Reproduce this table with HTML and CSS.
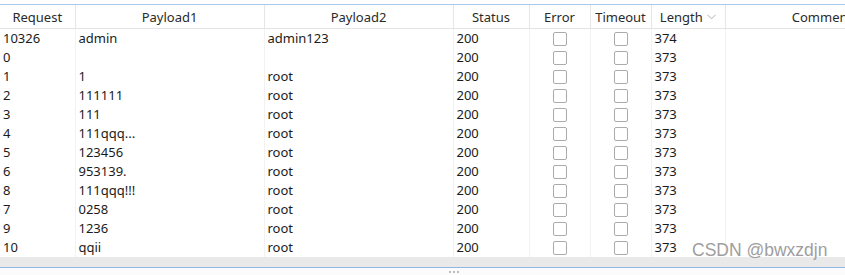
FILE: index.html
```html
<!DOCTYPE html>
<html>
<head>
<meta charset="utf-8">
<link rel="stylesheet" href="styles.css">
</head>
<body>
<div class="panel">
  <div class="topgap"></div>
  <table class="grid">
    <colgroup>
      <col class="c-req"><col class="c-p1"><col class="c-p2"><col class="c-st"><col class="c-err"><col class="c-to"><col class="c-len"><col class="c-com">
    </colgroup>
    <thead>
      <tr>
        <th>Request</th><th>Payload1</th><th>Payload2</th><th>Status</th><th>Error</th><th>Timeout</th><th>Length <span class="chev"><svg width="9" height="6" viewBox="0 0 9 6"><path d="M0.5 0.8 L4.5 4.8 L8.5 0.8" fill="none" stroke="#b0b0b0" stroke-width="1"/></svg></span></th><th>Comment</th>
      </tr>
    </thead>
    <tbody>
      <tr><td>10326</td><td>admin</td><td>admin123</td><td>200</td><td class="cb"><span class="box"></span></td><td class="cb"><span class="box"></span></td><td>374</td><td></td></tr>
      <tr><td>0</td><td></td><td></td><td>200</td><td class="cb"><span class="box"></span></td><td class="cb"><span class="box"></span></td><td>373</td><td></td></tr>
      <tr><td>1</td><td>1</td><td>root</td><td>200</td><td class="cb"><span class="box"></span></td><td class="cb"><span class="box"></span></td><td>373</td><td></td></tr>
      <tr><td>2</td><td>111111</td><td>root</td><td>200</td><td class="cb"><span class="box"></span></td><td class="cb"><span class="box"></span></td><td>373</td><td></td></tr>
      <tr><td>3</td><td>111</td><td>root</td><td>200</td><td class="cb"><span class="box"></span></td><td class="cb"><span class="box"></span></td><td>373</td><td></td></tr>
      <tr><td>4</td><td>111qqq...</td><td>root</td><td>200</td><td class="cb"><span class="box"></span></td><td class="cb"><span class="box"></span></td><td>373</td><td></td></tr>
      <tr><td>5</td><td>123456</td><td>root</td><td>200</td><td class="cb"><span class="box"></span></td><td class="cb"><span class="box"></span></td><td>373</td><td></td></tr>
      <tr><td>6</td><td>953139.</td><td>root</td><td>200</td><td class="cb"><span class="box"></span></td><td class="cb"><span class="box"></span></td><td>373</td><td></td></tr>
      <tr><td>8</td><td>111qqq!!!</td><td>root</td><td>200</td><td class="cb"><span class="box"></span></td><td class="cb"><span class="box"></span></td><td>373</td><td></td></tr>
      <tr><td>7</td><td>0258</td><td>root</td><td>200</td><td class="cb"><span class="box"></span></td><td class="cb"><span class="box"></span></td><td>373</td><td></td></tr>
      <tr><td>9</td><td>1236</td><td>root</td><td>200</td><td class="cb"><span class="box"></span></td><td class="cb"><span class="box"></span></td><td>373</td><td></td></tr>
      <tr><td>10</td><td>qqii</td><td>root</td><td>200</td><td class="cb"><span class="box"></span></td><td class="cb"><span class="box"></span></td><td>373</td><td></td></tr>
    </tbody>
  </table>
  <div class="hscroll"></div>
  <div class="splitter"><span class="dot"></span><span class="dot"></span><span class="dot"></span></div>
  <div class="watermark">CSDN @bwxzdjn</div>
</div>
</body>
</html>
```
FILE: styles.css
```css
html, body {
  margin: 0;
  padding: 0;
  background: #ffffff;
  overflow: hidden;
}
.panel {
  position: relative;
  width: 845px;
  height: 275px;
  overflow: hidden;
  font-family: "Noto Sans", "Open Sans", sans-serif;
  font-size: 13px;
  color: #1b1b1b;
}
.topgap {
  height: 4px;
  border-bottom: 1px solid #a9c9ea;
}
.grid {
  table-layout: fixed;
  border-collapse: collapse;
  width: 919px;
}
.c-req { width: 75px; }
.c-p1 { width: 189px; }
.c-p2 { width: 189px; }
.c-st { width: 76px; }
.c-err { width: 61px; }
.c-to { width: 61px; }
.c-len { width: 74px; }
.c-com { width: 194px; }
.grid th {
  height: 23px;
  padding: 0;
  font-weight: normal;
  color: #2a2a2a;
  text-align: center;
  border-right: 1px solid #e6e6e6;
  border-bottom: 1px solid #e4e4e4;
  white-space: nowrap;
  line-height: 22px;
}
.grid td {
  height: 19px;
  padding: 0 0 0 3px;
  line-height: 19px;
  white-space: nowrap;
  overflow: hidden;
  border-right: 1px solid #f2f2f2;
  text-align: left;
}
.grid td.cb {
  padding: 0;
  text-align: center;
}
.box {
  display: inline-block;
  width: 12px;
  height: 12px;
  border: 1px solid #ababab;
  border-radius: 2px;
  vertical-align: middle;
  margin-top: -2px;
  background: #fff;
}
.chev {
  display: inline-block;
  vertical-align: middle;
  margin-left: 1px;
  margin-top: -3px;
}
.chev svg { display: block; }
.hscroll {
  height: 10px;
  background: #e9e9e9;
  border-bottom: 1px solid #90b8e4;
}
.splitter {
  height: 7px;
  background: #fbfbfb;
  display: flex;
  justify-content: center;
  align-items: center;
  gap: 2px;
  padding-left: 62px;
}
.dot {
  width: 2px;
  height: 2px;
  border-radius: 1px;
  background: #a8a8a8;
}
.watermark {
  position: absolute;
  left: 692px;
  top: 240px;
  font-family: "Liberation Sans", Arial, sans-serif;
  font-size: 17.5px;
  color: #9e9e9e;
  text-shadow: 0 0 1px #ffffff;
  white-space: nowrap;
}
```
